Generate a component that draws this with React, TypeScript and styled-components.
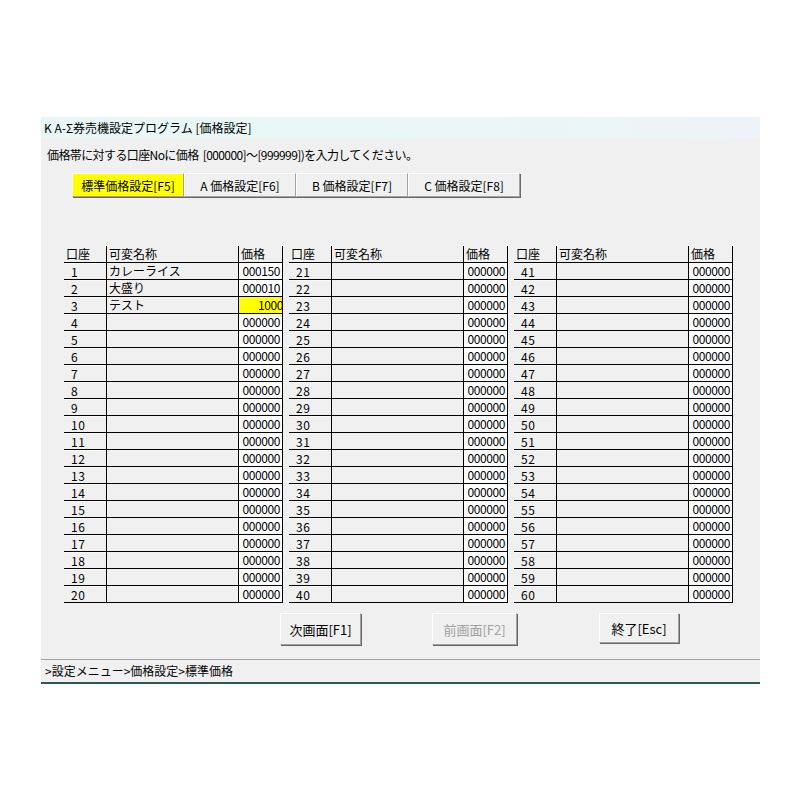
import React from "react";
import styled, { createGlobalStyle } from "styled-components";

const GlobalStyle = createGlobalStyle`
  body {
    margin: 0;
    background: #ffffff;
    font-family: "Noto Sans CJK JP", "Liberation Sans", sans-serif;
  }
`;

type Row = { no: number; name: string; price: string; active?: boolean };

const names: Record<number, string> = { 1: "カレーライス", 2: "大盛り", 3: "テスト" };
const prices: Record<number, string> = { 1: "000150", 2: "000010", 3: "1000" };

const makeRows = (start: number): Row[] =>
  Array.from({ length: 20 }, (_, i) => {
    const no = start + i;
    return {
      no,
      name: names[no] || "",
      price: prices[no] || "000000",
      active: no === 3,
    };
  });

const tabs = ["標準価格設定[F5]", "A 価格設定[F6]", "B 価格設定[F7]", "C 価格設定[F8]"];

const App: React.FC = () => {
  return (
    <>
      <GlobalStyle />
      <Window>
        <TitleBar>K A-Σ券売機設定プログラム [価格設定]</TitleBar>
        <Body>
          <Guide>価格帯に対する口座Noに価格 &nbsp;[000000]～[999999])を入力してください。</Guide>
          <TabRow>
            {tabs.map((t, i) => (
              <Tab key={t} active={i === 0}>
                {t}
              </Tab>
            ))}
          </TabRow>
          <Tables>
            {[1, 21, 41].map((start) => (
              <Grid key={start}>
                <HeadCell>口座</HeadCell>
                <HeadCell line>可変名称</HeadCell>
                <HeadCell line edge>
                  価格
                </HeadCell>
                {makeRows(start).map((r) => (
                  <React.Fragment key={r.no}>
                    <NoCell>{r.no}</NoCell>
                    <NameCell>{r.name}</NameCell>
                    <PriceCell active={r.active}>
                      <PriceText clip={r.active}>{r.price}</PriceText>
                    </PriceCell>
                  </React.Fragment>
                ))}
              </Grid>
            ))}
          </Tables>
          <ButtonRow>
            <Button offset={239} w={81}>
              次画面[F1]
            </Button>
            <Button offset={71} w={85} disabled>
              前画面[F2]
            </Button>
            <Button offset={82} w={80} short>
              終了[Esc]
            </Button>
          </ButtonRow>
        </Body>
        <StatusBar>&gt;設定メニュー&gt;価格設定&gt;標準価格</StatusBar>
      </Window>
    </>
  );
};

const Window = styled.div`
  margin: 117px 0 0 41px;
  width: 719px;
  background: #f0f0f0;
  border-bottom: 2px solid #2e5a55;
  font-size: 12px;
  color: #000;
`;

const TitleBar = styled.div`
  height: 21px;
  line-height: 21px;
  padding-left: 3px;
  background: linear-gradient(90deg, #e9f6f6 0%, #e9f7f7 40%, #edf3f8 100%);
  font-size: 12px;
  white-space: nowrap;
`;

const Body = styled.div`
  display: flex;
  flex-direction: column;
  padding: 8px 0 14px;
`;

const Guide = styled.div`
  height: 18px;
  line-height: 18px;
  padding-left: 6px;
  font-size: 12px;
  letter-spacing: -0.6px;
  white-space: nowrap;
`;

const TabRow = styled.div`
  display: flex;
  margin: 9px 0 0 31px;
`;

const Tab = styled.div<{ active?: boolean }>`
  width: 112px;
  height: 24px;
  box-sizing: border-box;
  display: flex;
  align-items: center;
  justify-content: center;
  font-size: 12px;
  background: ${(p) => (p.active ? "#ffff00" : "#f0f0f0")};
  border-top: 1px solid #ffffff;
  border-left: 1px solid #ffffff;
  border-right: 1px solid #a0a0a0;
  border-bottom: 1px solid #a0a0a0;
  box-shadow: 1px 1px 0 #696969;
  white-space: nowrap;
`;

const Tables = styled.div`
  display: flex;
  gap: 6px;
  margin: 49px 0 0 23px;
`;

const Grid = styled.div`
  display: grid;
  grid-template-columns: 42px 132px 45px;
  grid-auto-rows: 17px;
`;

const HeadCell = styled.div<{ line?: boolean; edge?: boolean }>`
  box-sizing: border-box;
  padding-left: 2px;
  line-height: 16px;
  font-size: 12px;
  border-bottom: 1px solid #000;
  border-left: ${(p) => (p.line ? "1px solid #000" : "none")};
  border-right: ${(p) => (p.edge ? "1px solid #000" : "none")};
  white-space: nowrap;
`;

const NoCell = styled.div`
  box-sizing: border-box;
  padding-left: 7px;
  line-height: 16px;
  font-size: 12px;
  border-bottom: 1px solid #000;
  border-top: 1px solid #fafafa;
  letter-spacing: 0.5px;
`;

const NameCell = styled.div`
  box-sizing: border-box;
  padding-left: 2px;
  line-height: 16px;
  font-size: 12px;
  border-left: 1px solid #000;
  border-bottom: 1px solid #000;
  white-space: nowrap;
  overflow: hidden;
`;

const PriceCell = styled.div<{ active?: boolean }>`
  box-sizing: border-box;
  display: flex;
  justify-content: flex-end;
  overflow: hidden;
  padding-right: 2px;
  line-height: 16px;
  font-size: 12px;
  background: ${(p) => (p.active ? "#ffff00" : "#ffffff")};
  border-left: 1px solid #000;
  border-right: 1px solid #000;
  border-bottom: 1px solid #000;
`;

const PriceText = styled.span<{ clip?: boolean }>`
  letter-spacing: -0.4px;
  margin-right: ${(p) => (p.clip ? "-3px" : "0")};
  white-space: nowrap;
`;

const ButtonRow = styled.div`
  display: flex;
  margin-top: 10px;
`;

const Button = styled.button<{ offset: number; w: number; short?: boolean }>`
  margin-left: ${(p) => p.offset}px;
  width: ${(p) => p.w}px;
  height: ${(p) => (p.short ? "30px" : "32px")};
  padding: 0;
  font-family: "Noto Sans CJK JP", "Liberation Sans", sans-serif;
  font-size: 13px;
  color: #000;
  background: #f0f0f0;
  border-top: 1px solid #ffffff;
  border-left: 1px solid #ffffff;
  border-right: 1px solid #a0a0a0;
  border-bottom: 1px solid #a0a0a0;
  box-shadow: 1px 1px 0 #696969;
  white-space: nowrap;

  &:disabled {
    color: #a0a0a0;
  }
`;

const StatusBar = styled.div`
  height: 22px;
  line-height: 22px;
  padding-left: 4px;
  border-top: 1px solid #a0a0a0;
  font-size: 12px;
  white-space: nowrap;
`;

export default App;
